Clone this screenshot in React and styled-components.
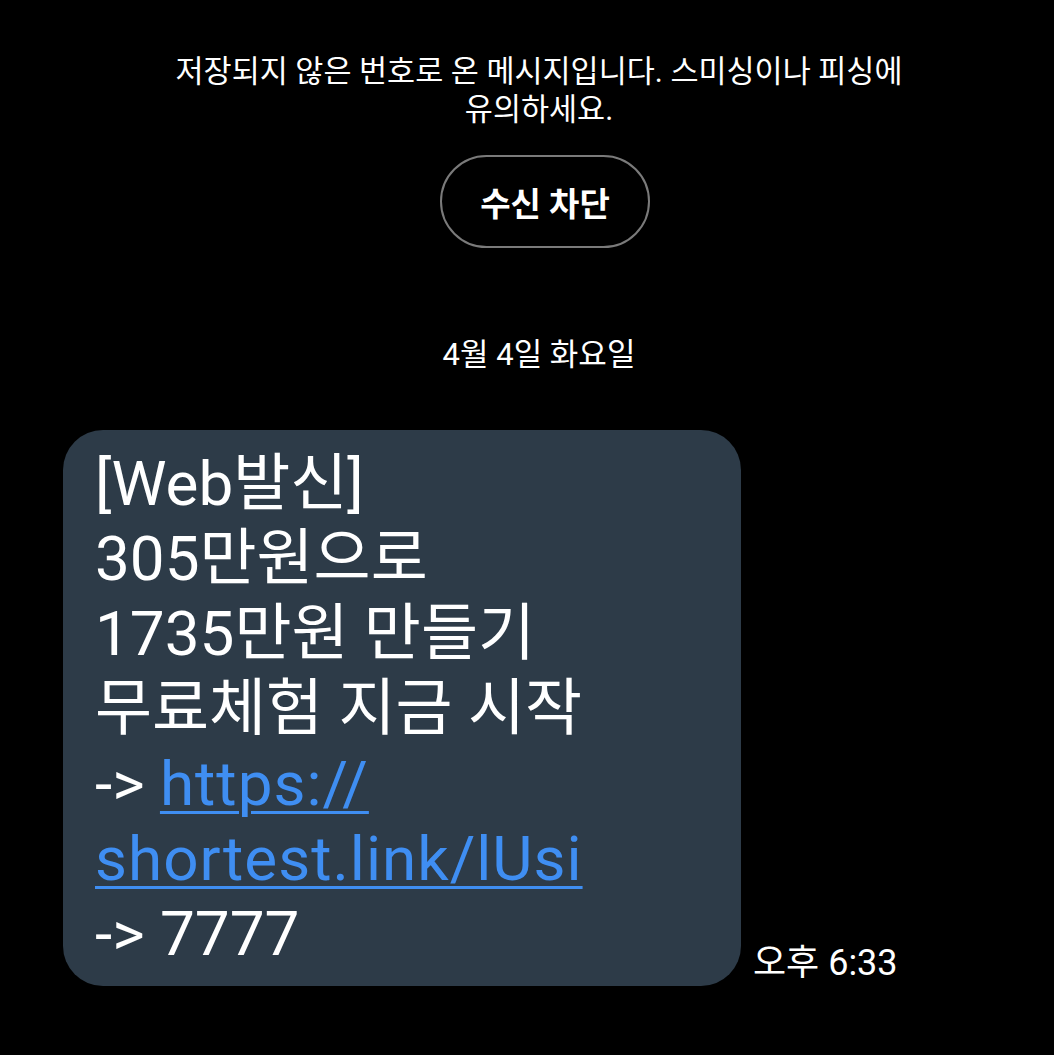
import React from 'react';
import styled, { createGlobalStyle } from 'styled-components';

const GlobalStyle = createGlobalStyle`
  html, body {
    margin: 0;
    padding: 0;
    background: #000;
  }
  body {
    font-family: Roboto, "Noto Sans CJK KR", sans-serif;
    color: #fff;
  }
`;

const Screen = styled.div`
  width: 1054px;
  min-height: 1055px;
  background: #000;
  display: flex;
  flex-direction: column;
  padding-top: 53px;
  box-sizing: border-box;
`;

const Center = styled.div`
  display: flex;
  flex-direction: column;
  align-items: center;
  padding-left: 24px;
`;

const Notice = styled.p`
  margin: 0;
  max-width: 735px;
  font-size: 30.5px;
  line-height: 38px;
  text-align: center;
  color: #fff;
`;

const BlockButton = styled.button`
  margin-top: 26px;
  margin-left: 12px;
  width: 210px;
  height: 93px;
  border: 2px solid #7a7a7a;
  border-radius: 47px;
  background: transparent;
  color: #fff;
  font-family: Roboto, "Noto Sans CJK KR", sans-serif;
  font-size: 33px;
  font-weight: 700;
  padding: 0;
`;

const DateLabel = styled.div`
  margin-top: 87px;
  font-size: 31px;
  line-height: 40px;
  color: #fff;
`;

const MessageRow = styled.div`
  display: flex;
  align-items: flex-end;
  gap: 12px;
  margin-top: 55px;
  padding-left: 63px;
`;

const Bubble = styled.div`
  width: 678px;
  box-sizing: border-box;
  padding: 16px 32px 15px;
  background: #2d3b48;
  border-radius: 40px;
  font-size: 62px;
  line-height: 75px;
  color: #fff;
  word-break: break-all;
`;

const Line = styled.div``;

const Link = styled.a`
  color: #3f8ef2;
  letter-spacing: 1px;
  text-decoration: underline;
  text-decoration-thickness: 3px;
  text-underline-offset: 6px;
`;

const Time = styled.span`
  font-size: 36px;
  line-height: 40px;
  color: #fff;
  margin-bottom: 3px;
`;

const App = () => (
  <>
    <GlobalStyle />
    <Screen>
      <Center>
        <Notice>저장되지 않은 번호로 온 메시지입니다. 스미싱이나 피싱에 유의하세요.</Notice>
        <BlockButton>수신 차단</BlockButton>
        <DateLabel>4월 4일 화요일</DateLabel>
      </Center>
      <MessageRow>
        <Bubble>
          <Line>[Web발신]</Line>
          <Line>305만원으로</Line>
          <Line>1735만원 만들기</Line>
          <Line>무료체험 지금 시작</Line>
          <Line>
            -&gt; <Link href="#">https://</Link>
          </Line>
          <Line>
            <Link href="#">shortest.link/lUsi</Link>
          </Line>
          <Line>-&gt; 7777</Line>
        </Bubble>
        <Time>오후 6:33</Time>
      </MessageRow>
    </Screen>
  </>
);

export default App;
